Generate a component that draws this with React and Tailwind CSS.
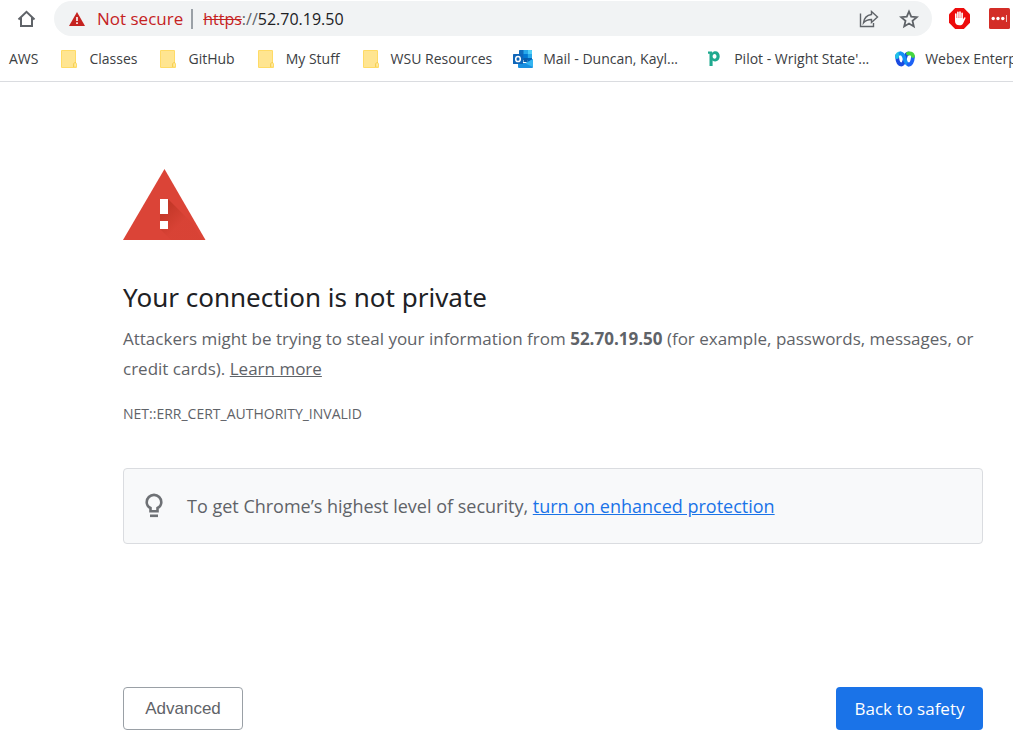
import React from "react";

function Folder() {
  return (
    <svg width="16" height="18" viewBox="0 0 16 18" aria-hidden="true">
      <path d="M1 0h13a1 1 0 0 1 1 1v11.500l1 1.200V17a1 1 0 0 1-1 1H1a1 1 0 0 1-1-1V1a1 1 0 0 1 1-1z" fill="#ffdb66" />
      <path d="M1 1h13v11.500l-1.500 1.500v3H1z" fill="#ffe591" />
      <path d="M13.500 13.500h1.300v3h-1.300z" fill="#ffeeb0" />
      <path d="M12.500 17v-3.200l1.200-1.300h1.300" fill="none" stroke="#f2cb4d" strokeWidth="0.800" />
    </svg>
  );
}

function OutlookIcon() {
  return (
    <svg width="20" height="18" viewBox="0 0 20 18" aria-hidden="true">
      <path d="M6 .6a.6.600 0 0 1 .6-.6h11.800a.6.600 0 0 1 .6.600V10H6z" fill="#0f6cbd" />
      <path d="M10.500 0h4.300v4h-4.300z" fill="#28a8ea" />
      <path d="M14.800 0h3.600a.6.600 0 0 1 .6.600V4h-4.200z" fill="#50d0f8" />
      <path d="M10.500 4h4.300v4h-4.300z" fill="#0078d4" />
      <path d="M14.800 4H19v4h-4.200z" fill="#28a8ea" />
      <path d="M10.500 8h4.300v4h-4.300z" fill="#0a5ca8" />
      <path d="M14.800 8H19v2l-4.200 2.500z" fill="#0364b8" />
      <path d="M5 13h7.500L20 9v8a1 1 0 0 1-1 1H6a1 1 0 0 1-1-1z" fill="#1a90e0" />
      <path d="M12.500 13.500L20 9v8z" fill="#35b5f1" />
      <rect x="0" y="4" width="10" height="10" rx="0.600" fill="#0f65b8" />
      <ellipse cx="5" cy="9" rx="2.300" ry="2.600" fill="none" stroke="#fff" strokeWidth="1.500" />
    </svg>
  );
}

function PilotIcon() {
  return (
    <svg width="12" height="15" viewBox="0 0 12 15" aria-hidden="true">
      <path
        d="M0 .5h4l.4 1.200C5.200.800 6.200.300 7.400.300c2.600 0 4.300 2.100 4.300 5s-1.800 5.200-4.500 5.200c-1.100 0-1.900-.3-2.600-1V15H1.500V2.800H0zM6.600 2.900c-1.200 0-2 .9-2 2.400s.8 2.500 2 2.500 1.900-1 1.900-2.500-.7-2.400-1.900-2.400z"
        fill="#1fa98f"
        fillRule="evenodd"
      />
    </svg>
  );
}

function WebexIcon() {
  return (
    <svg width="20" height="16" viewBox="0 0 20 16" fill="none" strokeWidth="3.800" strokeLinecap="round" aria-hidden="true">
      <path d="M13.500 2.500C10.500 2.500 10.500 6 9.600 9S8 13.500 6.300 13.500C3.500 13.500 2.300 9 2 5" stroke="#1a4be0" />
      <path d="M2 6C1.800 3.500 3.500 2.400 5.500 2.400" stroke="#22c3e8" />
      <path d="M5.500 2.400C8.500 2.400 9 6 10 9s2 4.500 3.700 4.500" stroke="#1590f5" />
      <path d="M13.700 13.500C16.500 13.500 17.700 9 18 6" stroke="#1e62f5" />
      <path d="M13 2.500C15.500 2 17.500 3 18 5" stroke="#46d63e" />
    </svg>
  );
}

function Bookmark({ icon, elided, children }) {
  return (
    <a href="#" className="flex shrink-0 items-center gap-2.5 whitespace-nowrap">
      {icon && <span className="flex w-5 justify-center">{icon}</span>}
      <span className={elided ? "w-35" : ""}>{children}</span>
    </a>
  );
}

function Toolbar() {
  return (
    <div className="flex h-9 items-center pt-px">
      <button type="button" aria-label="Home" className="ml-4 mr-[18px] shrink-0">
        <svg width="20" height="20" viewBox="0 0 20 20" fill="none" stroke="#5f6368" strokeWidth="2">
          <path d="M2.500 10.500L10.500 2.800l8 7.700M5 8.700v8.300h11V8.700" />
        </svg>
      </button>
      <div className="flex h-[35px] min-w-0 flex-1 items-center rounded-full bg-[#f1f3f4] pl-[15px] pr-3">
        <svg width="16" height="14" viewBox="0 0 16 14" className="shrink-0" aria-hidden="true">
          <path d="M8 0l8 14H0z" fill="#c5221f" />
          <path d="M7.200 5h1.600v4H7.200zM7.200 10.300h1.600v1.700H7.200z" fill="#fff" />
        </svg>
        <span className="ml-3 whitespace-nowrap text-[17px] text-[#c5221f]">Not secure</span>
        <span className="ml-2 mr-2.5 h-5 w-0.5 bg-[#9aa0a6]" />
        <span className="flex-1 text-base text-[#202124]">
          <s className="text-[#c5221f]">https</s>
          <span className="text-[#5f6368]">://</span>52.70.19.50
        </span>
        <button type="button" aria-label="Share" className="mr-5">
          <svg width="20" height="20" viewBox="0 0 20 20" fill="none" stroke="#5f6368" strokeWidth="1.400">
            <path d="M1.500 4.500v13h13v-3.500" />
            <path d="M12.500 2.500L18.500 8l-6 5.500v-3c-3.500 0-6 .8-8 3.300.5-4.300 3.300-7.600 8-8.300z" />
          </svg>
        </button>
        <button type="button" aria-label="Bookmark this page" className="mr-px">
          <svg width="20" height="20" viewBox="0 0 20 20" fill="none" stroke="#5f6368" strokeWidth="1.800">
            <path d="M10 2.500l2.200 5.200 5.600.500-4.300 3.700 1.300 5.500-4.800-2.900-4.800 2.900 1.300-5.500L2.200 8.200l5.600-.500z" />
          </svg>
        </button>
      </div>
      <button type="button" aria-label="Ad blocker" className="ml-[17px] shrink-0">
        <svg width="21" height="21" viewBox="0 0 21 21">
          <path d="M6.200 0h8.600L21 6.200v8.600L14.800 21H6.200L0 14.800V6.200z" fill="#ed0c0c" />
          <g stroke="#fff" strokeWidth="1.600" strokeLinecap="round" fill="none">
            <path d="M6.800 10.500V6M8.900 9.500V4.200M11 9.500V4M13.100 10.500V5.200" />
          </g>
          <path d="M6 10h7.900v1.500l1-1.600c.6-.9 1.800-.6 1.500.5l-2.100 4.600c-.7 1.500-1.800 2.300-3.700 2.300C7.600 17.300 6 15.800 6 13z" fill="#fff" />
        </svg>
      </button>
      <button type="button" aria-label="Password manager" className="ml-[19px] mr-[3px] shrink-0">
        <svg width="21" height="21" viewBox="0 0 21 21">
          <rect width="21" height="21" rx="1.500" fill="#d32d27" />
          <g fill="#fff">
            <circle cx="4.200" cy="10.500" r="1.700" />
            <circle cx="9" cy="10.500" r="1.700" />
            <circle cx="13.800" cy="10.500" r="1.700" />
            <rect x="17" y="7" width="1" height="7" fillOpacity="0.700" />
          </g>
        </svg>
      </button>
    </div>
  );
}

export default function App() {
  return (
    <div className="overflow-hidden bg-white font-['Open_Sans','Noto_Sans',sans-serif] text-[#5f6368]">
      <header className="border-b border-[#dadce0]">
        <Toolbar />
        <nav aria-label="Bookmarks" className="flex h-[45px] items-center gap-[21px] overflow-hidden pl-[9px] text-sm text-[#3c4043]">
          <Bookmark>AWS</Bookmark>
          <Bookmark icon={<Folder />}>Classes</Bookmark>
          <Bookmark icon={<Folder />}>GitHub</Bookmark>
          <Bookmark icon={<Folder />}>My Stuff</Bookmark>
          <Bookmark icon={<Folder />}>WSU Resources</Bookmark>
          <Bookmark icon={<OutlookIcon />} elided>Mail - Duncan, Kayl...</Bookmark>
          <Bookmark icon={<PilotIcon />} elided>Pilot - Wright State'...</Bookmark>
          <Bookmark icon={<WebexIcon />}>Webex Enterprise</Bookmark>
        </nav>
      </header>

      <main className="ml-[123px] mr-[30px] pt-[87px]">
        <svg width="83" height="72" viewBox="0 0 83 72" aria-hidden="true">
          <defs>
            <linearGradient id="shade" x1="40" y1="36" x2="58" y2="54" gradientUnits="userSpaceOnUse">
              <stop offset="0" stopColor="#a52714" stopOpacity="0.500" />
              <stop offset="1" stopColor="#a52714" stopOpacity="0.050" />
            </linearGradient>
          </defs>
          <path d="M41.500 0L82.500 71H0z" fill="#db4437" />
          <path d="M45 30L69 54 79 71H48L37 60V45z" fill="url(#shade)" />
          <path d="M37 30h8v15h-8zM37 52h8v8h-8z" fill="#fff" />
        </svg>
        <h1 className="mt-9 font-['Noto_Sans','Open_Sans',sans-serif] text-[26px] leading-10 text-[#202124]">Your connection is not private</h1>
        <p className="mt-[7px] text-[17px] leading-[30px]">
          Attackers might be trying to steal your information from <strong>52.70.19.50</strong> (for example, passwords,
          messages, or credit cards). <a href="#" className="underline">Learn more</a>
        </p>
        <p className="mt-5 text-sm leading-5">NET::ERR_CERT_AUTHORITY_INVALID</p>
        <section className="mt-11 flex h-[76px] items-center rounded border border-[#dadce0] bg-[#f8f9fa] pl-[21px]">
          <svg width="18" height="26" viewBox="0 0 18 26" fill="none" stroke="#6e7175" strokeWidth="2.600" className="shrink-0" aria-hidden="true">
            <path d="M5.500 18.200v-3.200C3 13.700 1.700 11.800 1.700 9.200a7.300 7.300 0 0 1 14.600 0c0 2.600-1.300 4.500-3.800 5.800v3.200z" />
            <path d="M5 22.800h8" />
          </svg>
          <p className="ml-6 text-lg">
            To get Chrome’s highest level of security, <a href="#" className="text-[#1a73e8] underline">turn on enhanced protection</a>
          </p>
        </section>
        <div className="mt-[143px] flex justify-between">
          <button type="button" className="h-[43px] w-30 rounded border border-[#9aa0a6] font-['Liberation_Sans',sans-serif] text-[17px]">Advanced</button>
          <button type="button" className="h-[43px] w-[147px] rounded bg-[#1a73e8] text-[17px] text-white">Back to safety</button>
        </div>
      </main>
    </div>
  );
}
